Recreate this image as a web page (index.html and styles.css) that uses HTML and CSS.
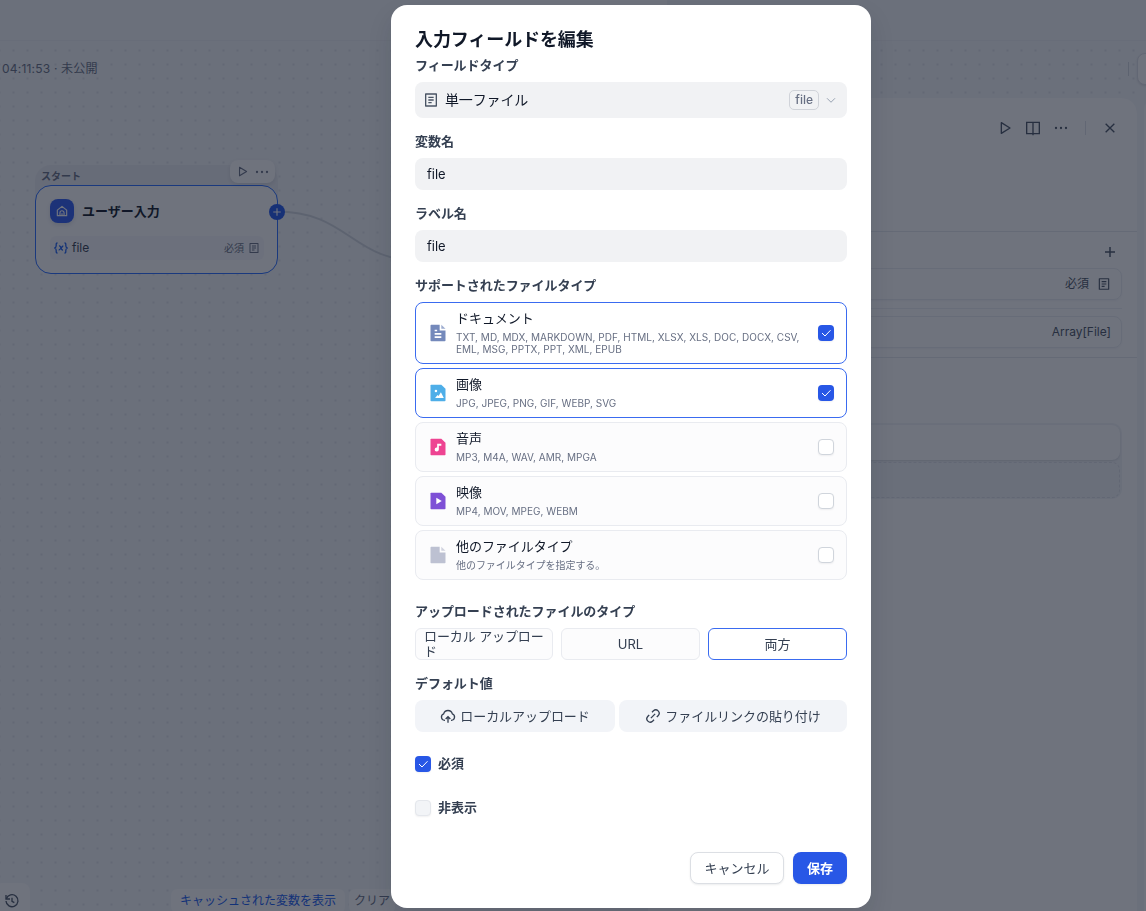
FILE: index.html
```html
<!DOCTYPE html>
<html lang="ja">
<head>
  <meta charset="UTF-8">
  <meta name="viewport" content="width=device-width, initial-scale=1.0">
  <title>入力フィールドを編集</title>
  <link rel="stylesheet" href="styles.css">
</head>
<body>
  <svg class="sprite" aria-hidden="true">
    <symbol id="i-file" viewBox="0 0 24 24"><path fill="currentColor" d="M20 22H4a1 1 0 0 1-1-1V3a1 1 0 0 1 1-1h16a1 1 0 0 1 1 1v18a1 1 0 0 1-1 1Zm-1-2V4H5v16h14ZM8 7h8v2H8V7Zm0 4h8v2H8v-2Zm0 4h5v2H8v-2Z"/></symbol>
    <symbol id="i-play" viewBox="0 0 24 24"><path fill="none" stroke="currentColor" stroke-width="2" stroke-linejoin="round" d="M6.500 4l13 8-13 8z"/></symbol>
    <symbol id="i-more" viewBox="0 0 24 24"><path fill="currentColor" d="M4.500 10.300a1.700 1.700 0 1 0 0 3.400 1.700 1.700 0 0 0 0-3.400Zm7.500 0a1.700 1.700 0 1 0 0 3.400 1.700 1.700 0 0 0 0-3.400Zm7.500 0a1.700 1.700 0 1 0 0 3.400 1.700 1.700 0 0 0 0-3.400Z"/></symbol>
    <symbol id="i-plus" viewBox="0 0 24 24"><path fill="none" stroke="currentColor" stroke-width="2.200" d="M12 4.500v15M4.500 12h15"/></symbol>
    <symbol id="i-check" viewBox="0 0 24 24"><path fill="none" stroke="currentColor" stroke-width="2" d="M4 12l6 6L21 6.500"/></symbol>
  </svg>

  <div class="app">
    <header class="topbar"><div class="topbar-tab"></div></header>

    <main class="canvas">
      <div class="status">04:11:53 · 未公開</div>

      <svg class="edge" width="180" height="80" viewBox="0 0 180 80"><path d="M0 11.500C74 11.500 74 61.500 148 61.500" fill="none" stroke="#d0d5dc" stroke-width="2"/></svg>

      <div class="node-group">
        <div class="node-label">スタート</div>
        <div class="node">
          <div class="node-head">
            <span class="node-icon"><svg width="14" height="14" viewBox="0 0 24 24" fill="none" stroke="#fff" stroke-width="2" stroke-linejoin="round"><path d="M4 10.500L12 4l8 6.500V20H4z"/><path d="M8.500 20v-5a3.500 3.500 0 0 1 7 0v5M12 20v-4"/></svg></span>
            <span class="node-title">ユーザー入力</span>
          </div>
          <div class="node-var">
            <svg class="var-icon" width="14" height="14" viewBox="0 0 14 14" fill="none" stroke="currentColor" stroke-width="1.300"><path d="M3.500 2C2 2 2.200 3 2.200 4.500S1.800 6.600.8 7c1 .4 1.400 1 1.400 2.500S2 12 3.500 12M10.500 2c1.500 0 1.300 1 1.300 2.500s.4 2.100 1.400 2.500c-1 .4-1.400 1-1.400 2.500s.2 2.500-1.300 2.500"/><path d="M5 5c1.500-.3 1.500.8 2 2s.7 2.200 2 2M9.300 5C7.800 5 6.500 9 4.700 9"/></svg>
            <span class="var-name">file</span>
            <span class="var-req">必須</span>
            <svg width="12" height="12"><use href="#i-file"/></svg>
          </div>
        </div>
        <div class="node-tools">
          <svg width="13" height="13"><use href="#i-play"/></svg>
          <svg width="16" height="16"><use href="#i-more"/></svg>
        </div>
        <span class="node-handle"><svg width="12" height="12"><use href="#i-plus"/></svg></span>
      </div>

      <div class="history"><svg width="16" height="16" viewBox="0 0 24 24" fill="none" stroke="currentColor" stroke-width="2"><path d="M3.500 8.500A9 9 0 1 1 3 12"/><path d="M3 3v6h6M12 7v5.500l3.500 2"/></svg></div>
      <div class="cache-bar">
        <span class="cache-view">キャッシュされた変数を表示</span>
        <span class="cache-clear">クリア</span>
      </div>
      <div class="top-sep"></div>
      <div class="top-button"></div>

      <aside class="panel">
        <div class="panel-head">
          <svg width="16" height="16"><use href="#i-play"/></svg>
          <svg width="16" height="16" viewBox="0 0 24 24" fill="none" stroke="currentColor" stroke-width="2"><path d="M2.500 3.500h19v17h-19zM12 3.500V23"/></svg>
          <svg width="16" height="16"><use href="#i-more"/></svg>
          <i class="panel-sep"></i>
          <svg width="16" height="16" viewBox="0 0 24 24" fill="none" stroke="currentColor" stroke-width="2"><path d="M5.500 5.500l13 13M18.500 5.500l-13 13"/></svg>
        </div>
        <div class="panel-vars">
          <div class="panel-add"><svg width="16" height="16"><use href="#i-plus"/></svg></div>
          <div class="panel-row"><span>必須</span><svg width="14" height="14"><use href="#i-file"/></svg></div>
          <div class="panel-line"></div>
          <div class="panel-row">Array[File]</div>
        </div>
        <div class="panel-next">
          <div class="next-item"></div>
          <div class="next-add"></div>
        </div>
      </aside>
      <div class="side-edge"></div>
    </main>
  </div>

  <div class="overlay">
    <div class="modal">
      <h1>入力フィールドを編集</h1>

      <div class="field">
        <div class="label">フィールドタイプ</div>
        <div class="select">
          <svg class="select-icon" width="16" height="16"><use href="#i-file"/></svg>
          <span class="select-value">単一ファイル</span>
          <span class="badge">file</span>
          <svg class="chevron" width="12" height="12" viewBox="0 0 24 24" fill="none" stroke="currentColor" stroke-width="2"><path d="M4 8.500l8 8 8-8"/></svg>
        </div>
      </div>

      <div class="field">
        <div class="label">変数名</div>
        <div class="input">file</div>
      </div>

      <div class="field">
        <div class="label">ラベル名</div>
        <div class="input">file</div>
      </div>

      <div class="field">
        <div class="label">サポートされたファイルタイプ</div>
        <div class="types">
          <div class="type active">
            <svg class="type-icon doc" width="20" height="20" viewBox="0 0 24 24"><path fill="currentColor" d="M4 2h10v7h7v12a1 1 0 0 1-1 1H4a1 1 0 0 1-1-1V3a1 1 0 0 1 1-1Z"/><path fill="currentColor" opacity=".7" d="M16 2l5 5h-5z"/><path fill="none" stroke="#fff" stroke-width="2" d="M8 9h3M8 13h8M8 17h8"/></svg>
            <div class="type-text">
              <div class="type-name">ドキュメント</div>
              <div class="type-ext">TXT, MD, MDX, MARKDOWN, PDF, HTML, XLSX, XLS, DOC, DOCX, CSV, EML, MSG, PPTX, PPT, XML, EPUB</div>
            </div>
            <span class="checkbox checked"><svg width="12" height="12"><use href="#i-check"/></svg></span>
          </div>
          <div class="type active">
            <svg class="type-icon image" width="20" height="20" viewBox="0 0 24 24"><path fill="currentColor" d="M4 2h12l5 5v14a1 1 0 0 1-1 1H4a1 1 0 0 1-1-1V3a1 1 0 0 1 1-1Z"/><path fill="#fff" d="M8.500 18l3-3.500 1.200 1 2.800-4.500L19 18z"/><circle cx="9.500" cy="9.500" r="1.500" fill="#fff"/></svg>
            <div class="type-text">
              <div class="type-name">画像</div>
              <div class="type-ext">JPG, JPEG, PNG, GIF, WEBP, SVG</div>
            </div>
            <span class="checkbox checked"><svg width="12" height="12"><use href="#i-check"/></svg></span>
          </div>
          <div class="type">
            <svg class="type-icon audio" width="20" height="20" viewBox="0 0 24 24"><path fill="currentColor" d="M4 2h12l5 5v14a1 1 0 0 1-1 1H4a1 1 0 0 1-1-1V3a1 1 0 0 1 1-1Z"/><path fill="#fff" d="M11 8h5v2.500h-3V15a2.500 2.500 0 1 1-2-2.450z"/></svg>
            <div class="type-text">
              <div class="type-name">音声</div>
              <div class="type-ext">MP3, M4A, WAV, AMR, MPGA</div>
            </div>
            <span class="checkbox"></span>
          </div>
          <div class="type">
            <svg class="type-icon video" width="20" height="20" viewBox="0 0 24 24"><path fill="currentColor" d="M4 2h12l5 5v14a1 1 0 0 1-1 1H4a1 1 0 0 1-1-1V3a1 1 0 0 1 1-1Z"/><path fill="#fff" d="M10 8v8l6.500-4z"/></svg>
            <div class="type-text">
              <div class="type-name">映像</div>
              <div class="type-ext">MP4, MOV, MPEG, WEBM</div>
            </div>
            <span class="checkbox"></span>
          </div>
          <div class="type">
            <svg class="type-icon other" width="20" height="20" viewBox="0 0 24 24"><path fill="currentColor" d="M4 2h10v7h7v12a1 1 0 0 1-1 1H4a1 1 0 0 1-1-1V3a1 1 0 0 1 1-1Z"/><path fill="currentColor" opacity=".7" d="M16 2l5 5h-5z"/></svg>
            <div class="type-text">
              <div class="type-name">他のファイルタイプ</div>
              <div class="type-ext type-note">他のファイルタイプを指定する。</div>
            </div>
            <span class="checkbox"></span>
          </div>
        </div>
      </div>

      <div class="field upload-field">
        <div class="label">アップロードされたファイルのタイプ</div>
        <div class="options">
          <div class="option option-left">ローカル アップロード</div>
          <div class="option">URL</div>
          <div class="option active">両方</div>
        </div>
      </div>

      <div class="field">
        <div class="label">デフォルト値</div>
        <div class="defaults">
          <button class="soft"><svg width="16" height="16" viewBox="0 0 24 24" fill="none" stroke="currentColor" stroke-width="2"><path d="M7.500 18.500H7a5 5 0 0 1-1.500-9.700 6.700 6.700 0 0 1 13 0A5 5 0 0 1 17 18.500h-.5M12 22v-8M8.500 16.500L12 13l3.500 3.500"/></svg>ローカルアップロード</button>
          <button class="soft"><svg width="16" height="16" viewBox="0 0 24 24" fill="none" stroke="currentColor" stroke-width="2"><path d="M10.500 6.300l2.200-2.200a5.100 5.100 0 0 1 7.200 7.200l-2.200 2.200M13.500 17.700l-2.200 2.200a5.100 5.100 0 0 1-7.200-7.200l2.200-2.200M8.800 15.200l6.400-6.400"/></svg>ファイルリンクの貼り付け</button>
        </div>
      </div>

      <div class="check-row">
        <span class="checkbox checked"><svg width="12" height="12"><use href="#i-check"/></svg></span>
        <span class="check-label">必須</span>
      </div>
      <div class="check-row">
        <span class="checkbox disabled"></span>
        <span class="check-label">非表示</span>
      </div>

      <div class="actions">
        <button class="btn btn-cancel">キャンセル</button>
        <button class="btn btn-save">保存</button>
      </div>
    </div>
  </div>
</body>
</html>
```

FILE: styles.css
```css
/* Reset */
* {
  box-sizing: border-box;
  margin: 0;
  padding: 0;
}

body {
  font-family: Inter, 'Noto Sans CJK JP', sans-serif;
  font-size: 13px;
  line-height: 16px;
  color: #354052;
  background: #f2f4f7;
  width: 1146px;
  height: 911px;
  overflow: hidden;
}

svg {
  display: block;
  flex-shrink: 0;
}

button {
  font: inherit;
  color: inherit;
  border: none;
  white-space: nowrap;
}

.sprite {
  position: absolute;
  width: 0;
  height: 0;
}

/* Workflow behind the dialog */
.app {
  height: 911px;
  display: flex;
  flex-direction: column;
}

.topbar {
  height: 41px;
  border-bottom: 1px solid #eceef2;
  padding-left: 470px;
}

.topbar-tab {
  width: 197px;
  height: 30px;
  background: #fcfcfd;
  border-radius: 0 0 10px 10px;
}

.canvas {
  position: relative;
  flex: 1;
  background-image: radial-gradient(circle at 7px 7px, #dfe2e8 0.8px, transparent 1.2px);
  background-size: 14px 14px;
  background-position: 6.500px 2.500px;
}

.status {
  padding: 20px 0 0 2px;
  font-size: 12px;
  letter-spacing: 0.200px;
  color: #676f83;
}

.edge {
  position: absolute;
  left: 276px;
  top: 159px;
}

.node-group {
  position: absolute;
  left: 35px;
  top: 124px;
  width: 243px;
  background: #e9ebf0;
  border-radius: 16px;
}

.node-label {
  height: 20px;
  padding: 3px 6px 0;
  font-size: 10px;
  font-weight: 600;
  color: #676f83;
}

.node {
  height: 89px;
  padding: 13px 13px 0 14px;
  background: #fcfcfd;
  border: 1.500px solid #296dff;
  border-radius: 16px;
}

.node-head {
  display: flex;
  align-items: center;
  gap: 8px;
  height: 24px;
}

.node-icon {
  width: 24px;
  height: 24px;
  display: flex;
  align-items: center;
  justify-content: center;
  background: #2e5bf0;
  border-radius: 8px;
  box-shadow: 0 2px 4px rgba(16, 24, 40, 0.12);
}

.node-title {
  font-size: 13px;
  font-weight: 600;
  color: #101828;
}

.node-var {
  margin-top: 13px;
  height: 24px;
  width: 214px;
  padding: 0 4px;
  display: flex;
  align-items: center;
  gap: 4px;
  background: #f5f6f9;
  border-radius: 6px;
}

.var-icon {
  color: #155aef;
}

.var-name {
  flex: 1;
  font-size: 12px;
}

.var-req {
  font-size: 10px;
  color: #676f83;
}

.node-var svg:last-child {
  color: #676f83;
}

.node-tools {
  position: absolute;
  left: 195px;
  top: -5px;
  width: 45px;
  height: 23px;
  display: flex;
  align-items: center;
  justify-content: center;
  gap: 5px;
  background: #fcfcfd;
  border-radius: 8px;
  box-shadow: 0 2px 4px rgba(16, 24, 40, 0.1);
  color: #676f83;
}

.node-handle {
  position: absolute;
  left: 233.500px;
  top: 38.500px;
  width: 16px;
  height: 16px;
  display: flex;
  align-items: center;
  justify-content: center;
  background: #2257ec;
  border-radius: 50%;
  color: #fff;
}

.history {
  position: absolute;
  left: -6px;
  bottom: -6px;
  width: 36px;
  height: 34px;
  padding: 10px 0 0 10px;
  background: #fcfcfd;
  border-radius: 8px;
  color: #495464;
}

.cache-bar {
  position: absolute;
  left: 171px;
  bottom: -2px;
  display: flex;
  gap: 4px;
  height: 24px;
  line-height: 23px;
  font-size: 12px;
}

.cache-view,
.cache-clear {
  padding: 0 9px;
  background: #fcfcfd;
  border-radius: 6px;
}

.cache-view {
  width: 174px;
  color: #155aef;
}

.cache-clear {
  padding: 0 5px;
  color: #676f83;
}

.top-sep {
  position: absolute;
  left: 1128px;
  top: 21px;
  width: 1px;
  height: 14px;
  background: #d0d5dc;
}

.top-button {
  position: absolute;
  left: 1137px;
  top: 12px;
  width: 60px;
  height: 32px;
  background: #fcfcfd;
  border: 1px solid #dcdfe6;
  border-radius: 8px;
  box-shadow: 0 1px 2px rgba(16, 24, 40, 0.1);
}

.panel {
  position: absolute;
  left: 647px;
  top: 56px;
  width: 491px;
  height: 830px;
  background: #fcfcfd;
  border: 1px solid #f2f4f7;
  border-radius: 16px;
  color: #495464;
}

.panel-head {
  height: 134px;
  padding: 22px 19px 0;
  display: flex;
  justify-content: flex-end;
  gap: 12px;
  border-bottom: 1px solid #e4e7ec;
}

.panel-sep {
  width: 1px;
  height: 14px;
  margin: 1px 4px 0;
  background: #dcdfe6;
}

.panel-vars {
  height: 126px;
  padding: 12px 15px 0;
  border-bottom: 1px solid #e4e7ec;
}

.panel-add {
  display: flex;
  justify-content: flex-end;
  height: 24px;
  padding-right: 4px;
}

.panel-row {
  height: 32px;
  padding: 0 10px;
  display: flex;
  align-items: center;
  justify-content: flex-end;
  gap: 8px;
  font-size: 12px;
  border: 1px solid #e9ebf0;
  border-radius: 8px;
  box-shadow: 0 1px 2px rgba(16, 24, 40, 0.04);
}

.panel-line {
  height: 1px;
  margin: 8px 0 7px;
  background: #eceef2;
}

.panel-next {
  margin: 65px 15px 0;
  height: 76px;
  padding: 2px;
  background: #f0f2f5;
  border-radius: 10px;
}

.next-item {
  height: 35px;
  background: #fcfcfd;
  border-radius: 8px;
  box-shadow: 0 1px 2px rgba(16, 24, 40, 0.12);
}

.next-add {
  margin-top: 2px;
  height: 36px;
  border: 1px dashed #dcdfe6;
  border-radius: 8px;
}

.side-edge {
  position: absolute;
  left: 1144px;
  top: 58px;
  width: 10px;
  height: 830px;
  background: #fcfcfd;
  border-radius: 12px 0 0 0;
}

/* Dialog */
.overlay {
  position: fixed;
  inset: 0;
  padding: 5px 0 0 391px;
  background: rgba(16, 24, 40, 0.6);
}

.modal {
  width: 480px;
  height: 903px;
  padding: 24px;
  background: #fff;
  border-radius: 16px;
  box-shadow: 0 12px 24px rgba(16, 24, 40, 0.12);
}

.modal h1 {
  height: 20px;
  margin-bottom: 5px;
  font-size: 18px;
  font-weight: 600;
  line-height: 22px;
  letter-spacing: -0.100px;
  color: #101828;
}

.field {
  margin-bottom: 12px;
}

.label {
  height: 24px;
  margin-bottom: 4px;
  font-weight: 600;
  line-height: 22px;
  letter-spacing: -0.050px;
}

.select {
  height: 36px;
  padding: 0 10px 0 8px;
  display: flex;
  align-items: center;
  gap: 6px;
  background: #f1f2f4;
  border-radius: 8px;
  color: #101828;
}

.select-value {
  font-size: 14px;
  letter-spacing: -0.150px;
}

.select-icon {
  color: #495464;
}

.badge {
  margin-left: auto;
  height: 20px;
  padding: 0 5px;
  border: 1px solid #d0d3d9;
  border-radius: 5px;
  font-size: 12px;
  font-weight: 500;
  line-height: 18px;
  color: #676f83;
}

.chevron {
  color: #98a2b2;
}

.input {
  height: 32px;
  padding: 0 12px;
  background: #f1f2f4;
  border-radius: 8px;
  line-height: 32px;
  color: #101828;
}

.types {
  display: flex;
  flex-direction: column;
  gap: 4px;
}

.type {
  display: flex;
  align-items: center;
  gap: 8px;
  padding: 8px 12px;
  background: #fcfcfd;
  border: 1px solid #e9ebf0;
  border-radius: 8px;
}

.type.active,
.option.active {
  background: #fff;
  border-color: #3a6bf0;
}

.type-text {
  flex: 1;
}

.type-name {
  height: 16px;
  margin-bottom: 4px;
  line-height: 15px;
  letter-spacing: -0.050px;
  color: #101828;
}

.type-ext {
  width: 350px;
  font-size: 10px;
  line-height: 12px;
  letter-spacing: 0.030px;
  color: #676f83;
}

.type-note {
  letter-spacing: -0.050px;
}

.doc { color: #7489bb; }
.image { color: #4eaee8; }
.audio { color: #ee4492; }
.video { color: #7e50d6; }
.other { color: #bdc1d2; }

.checkbox {
  width: 16px;
  height: 16px;
  display: flex;
  align-items: center;
  justify-content: center;
  flex-shrink: 0;
  background: #fff;
  border: 1px solid #d0d5dc;
  border-radius: 4px;
  box-shadow: 0 1px 2px rgba(16, 24, 40, 0.06);
  color: #fff;
}

.checkbox.checked {
  background: #2857e6;
  border: none;
}

.checkbox.disabled {
  background: #f2f4f7;
  border-color: #e4e7ec;
}

.upload-field {
  margin-top: 20px;
}

.options {
  display: grid;
  grid-template-columns: 138px 139px 139px;
  gap: 8px;
}

.option {
  height: 32px;
  padding: 0 8px;
  display: flex;
  align-items: center;
  justify-content: center;
  background: #fcfcfd;
  border: 1px solid #e9ebf0;
  border-radius: 6px;
}

.option-left {
  letter-spacing: -0.100px;
  line-height: 15.500px;
  word-break: break-all;
}

.defaults {
  display: grid;
  grid-template-columns: 200px 228px;
  gap: 4px;
}

.soft {
  height: 32px;
  display: flex;
  align-items: center;
  justify-content: center;
  gap: 4px;
  background: #f2f4f8;
  border-radius: 8px;
  letter-spacing: -0.050px;
}

.check-row {
  display: flex;
  align-items: center;
  gap: 7px;
  height: 24px;
  margin-top: 20px;
  font-weight: 600;
}

.check-label {
  height: 18px;
}

.actions {
  display: flex;
  justify-content: flex-end;
  gap: 9px;
  margin-top: 32px;
}

.btn {
  height: 32px;
  padding: 0 8px;
  border-radius: 8px;
  box-shadow: 0 1px 2px rgba(16, 24, 40, 0.08);
}

.btn-cancel {
  width: 94px;
  background: #fff;
  border: 1px solid #dcdfe4;
}

.btn-save {
  width: 54px;
  background: #2857e6;
  color: #fff;
  font-weight: 600;
}
```
